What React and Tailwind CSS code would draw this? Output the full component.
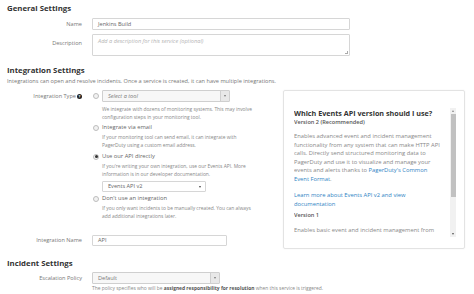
import React from 'react';

function Radio({ checked }) {
    return (
        <span className="w-[6px] h-[6px] rounded-full border border-[#bdbdbd] bg-[#f2f2f2] flex items-center justify-center flex-shrink-0">
            {checked && <span className="w-[3px] h-[3px] rounded-full bg-[#333]" />}
        </span>
    );
}

function Label({ children, className = '' }) {
    return (
        <div className={`w-[75px] flex-shrink-0 text-right text-[5.6px] text-[#777] ${className}`}>
            {children}
        </div>
    );
}

function GraySelect({ value, className = '' }) {
    return (
        <div className={`h-[12px] flex border border-[#cfcfcf] bg-[#f7f7f7] rounded-[1px] ${className}`}>
            <span className="flex-1 pl-[5px] text-[5.6px] leading-[11px] text-[#777]">{value}</span>
            <span className="w-[9px] border-l border-[#cfcfcf] bg-[#e8e8e8] flex items-center justify-center">
                <span className="w-0 h-0 border-l-[1.5px] border-r-[1.5px] border-t-[2px] border-l-transparent border-r-transparent border-t-[#777]" />
            </span>
        </div>
    );
}

function Option({ checked, label, help, className = '' }) {
    return (
        <div className={className}>
            <div className="flex items-center h-[9px]">
                <Radio checked={checked} />
                <span className="ml-[3px] text-[5.8px] text-[#666]">{label}</span>
            </div>
            <p className="ml-[9px] mt-[1px] text-[4.9px] leading-[8px] text-[#888] whitespace-nowrap">
                {help[0]}
                <br />
                {help[1]}
            </p>
        </div>
    );
}

export default function App() {
    return (
        <div className="w-[474px] h-[294px] overflow-hidden bg-white pl-[7px] text-[#555] font-['Open_Sans',sans-serif]">
            {/* General Settings */}
            <h2 className="pt-[3px] text-[7.8px] leading-[10px] font-bold text-[#333]">General Settings</h2>
            <div className="mt-[5px] flex items-center">
                <Label>Name</Label>
                <div className="ml-[10px] w-[258px] h-[12px] border border-[#d6d6d6] rounded-[1px] pl-[5px] text-[5.6px] leading-[10px] text-[#666]">
                    Jenkins Build
                </div>
            </div>
            <div className="mt-[4px] flex items-start">
                <Label className="pt-[5px]">Description</Label>
                <div className="ml-[10px] w-[258px] h-[22px] border border-[#d6d6d6] rounded-[1px] pl-[5px] pt-[1px] text-[5.6px] leading-[10px] italic text-[#b5b5b5] relative">
                    Add a description for this service (optional)
                    <span className="absolute right-[1px] bottom-[1px] w-[3px] h-[3px] border-r border-b border-[#aaa]" />
                </div>
            </div>

            {/* Integration Settings */}
            <h2 className="mt-[9px] text-[7.8px] leading-[10px] font-bold text-[#333]">Integration Settings</h2>
            <p className="mt-[2px] text-[5.6px] leading-[8px] text-[#777] whitespace-nowrap">
                Integrations can open and resolve incidents. Once a service is created, it can have multiple integrations.
            </p>

            <div className="mt-[5px] flex">
                <div className="w-[276px]">
                    {/* Integration Type */}
                    <div className="flex">
                        <Label className="flex items-center justify-end h-[12px]">
                            <span>Integration Type</span>
                            <span className="ml-[1px] w-[5px] h-[5px] rounded-full bg-[#222] text-white text-[4px] leading-[5px] font-bold flex items-center justify-center">?</span>
                        </Label>
                        <div className="ml-[11px] w-[137px]">
                            <div className="flex items-center h-[12px]">
                                <Radio />
                                <GraySelect value="Select a tool" className="ml-[3px] w-[128px] italic" />
                            </div>
                            <p className="ml-[9px] mt-[3px] text-[4.9px] leading-[8px] text-[#888] whitespace-nowrap">
                                We integrate with dozens of monitoring systems. This may involve
                                <br />
                                configuration steps in your monitoring tool.
                            </p>
                            <Option
                                className="mt-[2px]"
                                label="Integrate via email"
                                help={['If your monitoring tool can send email, it can integrate with', 'PagerDuty using a custom email address.']}
                            />
                            <Option
                                className="mt-[3px]"
                                checked
                                label="Use our API directly"
                                help={["If you're writing your own integration, use our Events API. More", 'information is in our developer documentation.']}
                            />
                            <div className="ml-[9px] mt-[3px] w-[104px] h-[11px] border border-[#d6d6d6] rounded-[1px] flex items-center justify-between pl-[5px] pr-[4px]">
                                <span className="text-[5.6px] text-[#666]">Events API v2</span>
                                <span className="w-0 h-0 border-l-[1.5px] border-r-[1.5px] border-t-[2px] border-l-transparent border-r-transparent border-t-[#444]" />
                            </div>
                            <Option
                                className="mt-[2px]"
                                label="Don't use an integration"
                                help={['If you only want incidents to be manually created. You can always', 'add additional integrations later.']}
                            />
                        </div>
                    </div>

                    {/* Integration Name */}
                    <div className="mt-[15px] flex items-center">
                        <Label>Integration Name</Label>
                        <div className="ml-[10px] w-[135px] h-[11px] border border-[#d6d6d6] rounded-[1px] pl-[5px] text-[5.6px] leading-[9px] text-[#666]">
                            API
                        </div>
                    </div>
                </div>

                {/* Events API help panel */}
                <div className="w-[182px] h-[159px] border border-[#e3e3e3] rounded-[2px] shadow-[0_0_2px_rgba(0,0,0,0.06)] pt-[17px] pl-[10px] pr-[8px]">
                    <div className="flex h-[129px]">
                        <div className="flex-1 overflow-hidden">
                            <h3 className="text-[7.2px] leading-[10px] font-bold text-[#333] whitespace-nowrap">Which Events API version should I use?</h3>
                            <h4 className="text-[5.6px] leading-[9px] font-semibold text-[#555]">Version 2 (Recommended)</h4>
                            <p className="mt-[5px] text-[5.8px] leading-[8.5px] text-[#888] whitespace-nowrap">
                                Enables advanced event and incident management
                                <br />
                                functionality from any system that can make HTTP API
                                <br />
                                calls. Directly send structured monitoring data to
                                <br />
                                PagerDuty and use it to visualize and manage your
                                <br />
                                events and alerts thanks to <span className="text-[#2f84c4]">PagerDuty's Common</span>
                                <br />
                                <span className="text-[#2f84c4]">Event Format</span>.
                            </p>
                            <p className="mt-[8px] text-[5.8px] leading-[8.5px] text-[#2f84c4] whitespace-nowrap">
                                Learn more about Events API v2 and view
                                <br />
                                documentation
                            </p>
                            <h4 className="mt-[3px] text-[5.6px] leading-[9px] font-semibold text-[#555]">Version 1</h4>
                            <p className="mt-[6px] text-[5.8px] leading-[8.5px] text-[#888] whitespace-nowrap">
                                Enables basic event and incident management from
                                <br />
                                any system that can make HTTP API calls.
                            </p>
                        </div>
                        {/* scrollbar */}
                        <div className="ml-[1px] w-[6px] flex flex-col items-center bg-[#f1f1f1]">
                            <span className="mt-[2px] w-0 h-0 border-l-[1.5px] border-r-[1.5px] border-b-[2px] border-l-transparent border-r-transparent border-b-[#888]" />
                            <span className="mt-[2px] w-[5px] h-[83px] bg-[#c1c1c1]" />
                            <span className="mt-auto mb-[2px] w-0 h-0 border-l-[1.5px] border-r-[1.5px] border-t-[2px] border-l-transparent border-r-transparent border-t-[#555]" />
                        </div>
                    </div>
                </div>
            </div>

            {/* Incident Settings */}
            <h2 className="mt-[9px] text-[7.8px] leading-[10px] font-bold text-[#333]">Incident Settings</h2>
            <div className="mt-[4px] flex items-center">
                <Label>Escalation Policy</Label>
                <GraySelect value="Default" className="ml-[10px] w-[128px]" />
            </div>
            <p className="ml-[85px] text-[4.9px] leading-[8px] text-[#888] whitespace-nowrap">
                The policy specifies who will be <span className="font-bold text-[#555]">assigned responsibility for resolution</span> when this service is triggered.
            </p>
        </div>
    );
}
